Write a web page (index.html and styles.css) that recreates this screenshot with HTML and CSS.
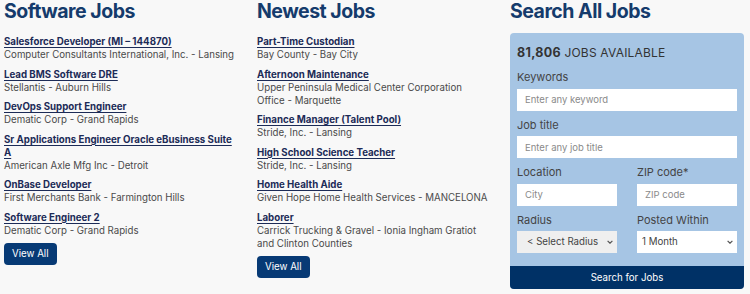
FILE: index.html
```html
<!DOCTYPE html>
<html>
<head>
<meta charset="utf-8">
<link rel="stylesheet" href="styles.css">
</head>
<body>
<div class="page">
  <section class="col">
    <h2 class="heading">Software Jobs</h2>
    <ul class="jobs">
      <li><a href="#">Salesforce Developer (MI – 144870)</a><span>Computer Consultants International, Inc. - Lansing</span></li>
      <li><a href="#">Lead BMS Software DRE</a><span>Stellantis - Auburn Hills</span></li>
      <li><a href="#">DevOps Support Engineer</a><span>Dematic Corp - Grand Rapids</span></li>
      <li><a href="#">Sr Applications Engineer Oracle eBusiness Suite A</a><span>American Axle Mfg Inc - Detroit</span></li>
      <li><a href="#">OnBase Developer</a><span>First Merchants Bank - Farmington Hills</span></li>
      <li><a href="#">Software Engineer 2</a><span>Dematic Corp - Grand Rapids</span></li>
    </ul>
    <a class="btn" href="#">View All</a>
  </section>
  <section class="col">
    <h2 class="heading">Newest Jobs</h2>
    <ul class="jobs">
      <li><a href="#">Part-Time Custodian</a><span>Bay County - Bay City</span></li>
      <li><a href="#">Afternoon Maintenance</a><span>Upper Peninsula Medical Center Corporation Office - Marquette</span></li>
      <li><a href="#">Finance Manager (Talent Pool)</a><span>Stride, Inc. - Lansing</span></li>
      <li><a href="#">High School Science Teacher</a><span>Stride, Inc. - Lansing</span></li>
      <li><a href="#">Home Health Aide</a><span>Given Hope Home Health Services - MANCELONA</span></li>
      <li><a href="#">Laborer</a><span>Carrick Trucking &amp; Gravel - Ionia Ingham Gratiot and Clinton Counties</span></li>
    </ul>
    <a class="btn" href="#">View All</a>
  </section>
  <section class="col">
    <h2 class="heading">Search All Jobs</h2>
    <form class="panel">
      <div class="panel-body">
        <p class="count"><b>81,806</b> JOBS AVAILABLE</p>
        <label class="field">Keywords<input type="text" placeholder="Enter any keyword"></label>
        <label class="field">Job title<input type="text" placeholder="Enter any job title"></label>
        <div class="pair">
          <label class="field">Location<input type="text" placeholder="City"></label>
          <label class="field">ZIP code*<input type="text" placeholder="ZIP code"></label>
        </div>
        <div class="pair">
          <label class="field">Radius
            <span class="select grey"><span>&lt; Select Radius</span><svg viewBox="0 0 10 6" width="6" height="4"><path d="M1 1l4 4 4-4" fill="none" stroke="#555" stroke-width="2"/></svg></span>
          </label>
          <label class="field">Posted Within
            <span class="select"><span>1 Month</span><svg viewBox="0 0 10 6" width="6" height="4"><path d="M1 1l4 4 4-4" fill="none" stroke="#555" stroke-width="2"/></svg></span>
          </label>
        </div>
      </div>
      <button type="button" class="submit">Search for Jobs</button>
    </form>
  </section>
</div>
</body>
</html>
```
FILE: styles.css
```css
html, body {
  margin: 0;
  padding: 0;
  background: #f8f8f8;
}
body {
  font-family: Inter, "Liberation Sans", sans-serif;
  color: #444;
}
.page {
  display: grid;
  grid-template-columns: 234px 234px 234px;
  column-gap: 19px;
  padding: 0 6px 0 4px;
  height: 294px;
  box-sizing: border-box;
  overflow: hidden;
}
.heading {
  margin: 0;
  font-size: 19.5px;
  line-height: 22px;
  font-weight: 700;
  color: #153b6c;
  letter-spacing: -0.5px;
}
.jobs {
  list-style: none;
  margin: 13px 0 0;
  padding: 0;
}
.jobs li {
  margin-bottom: 6.5px;
  font-size: 9.7px;
  line-height: 13px;
}
.jobs a {
  display: block;
  font-weight: 700;
  color: #1c2b57;
  text-decoration: underline;
  text-underline-offset: 1.5px;
}
.jobs span {
  display: block;
  color: #4a4a4a;
}
.btn {
  display: block;
  width: max-content;
  padding: 0 8px;
  height: 22px;
  line-height: 22px;
  background: #073a75;
  color: #fff;
  font-size: 9.7px;
  border-radius: 4px;
  text-decoration: none;
}
.panel {
  margin-top: 11px;
  background: #a6c5e4;
  border-radius: 4px;
  overflow: hidden;
}
.panel-body {
  padding: 12px 7px 13px;
}
.count {
  margin: 0 0 9px;
  font-size: 12px;
  line-height: 16px;
  color: #333;
  letter-spacing: 0.2px;
}
.count b {
  font-weight: 700;
  font-size: 12.5px;
  letter-spacing: 0.3px;
}
.field {
  display: block;
  font-size: 11px;
  line-height: 14px;
  color: #444;
}
.field input {
  display: block;
  box-sizing: border-box;
  width: 100%;
  height: 22px;
  margin: 4.5px 0 7px;
  border: 0;
  background: #fff;
  padding: 0 8px;
  font-family: inherit;
  font-size: 9.5px;
  color: #444;
  outline: none;
}
.field input::placeholder {
  color: #8a8a8a;
}
.pair {
  display: grid;
  grid-template-columns: 100px 100px;
  column-gap: 20px;
}
.pair:last-child .field .select {
  margin-bottom: 0;
}
.select {
  display: flex;
  align-items: center;
  justify-content: space-between;
  box-sizing: border-box;
  height: 22px;
  margin: 4.5px 0 7px;
  padding: 0 4px 0 5px;
  background: #fff;
  font-size: 9.7px;
  color: #444;
}
.select.grey {
  background: #efefef;
  padding-left: 10px;
}
.submit {
  display: block;
  height: 23px;
  border: 0;
  background: #003166;
  color: #fff;
  font-family: inherit;
  font-size: 9.7px;
  width: 100%;
}
```
